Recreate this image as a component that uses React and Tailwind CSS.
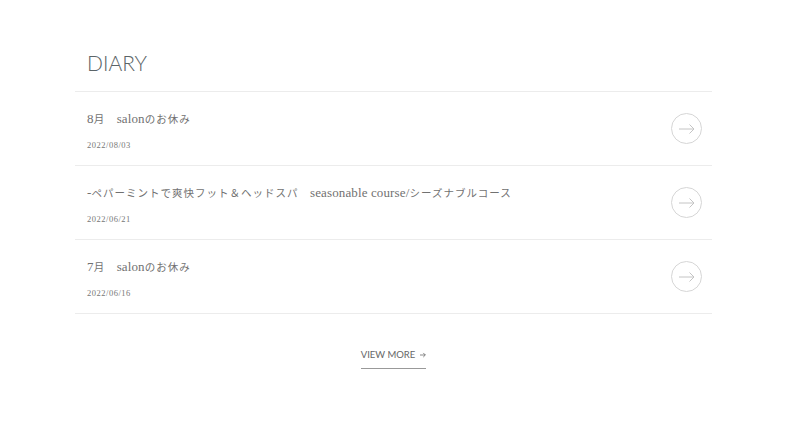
import React from 'react';

const posts = [
  { title: '8月\u3000salonのお休み', date: '2022/08/03' },
  { title: '-ペパーミントで爽快フット＆ヘッドスパ\u3000seasonable course/シーズナブルコース', date: '2022/06/21' },
  { title: '7月\u3000salonのお休み', date: '2022/06/16' },
];

// latin runs are set a little larger than the kana/kanji runs
function Title({ text }) {
  return text.split(/([\x00-\x7F]+)/).filter(Boolean).map((part, i) =>
    /^[\x00-\x7F]+$/.test(part)
      ? <span key={i} className="text-[13px] tracking-[0.01em]">{part}</span>
      : <span key={i} className="text-[10.5px] tracking-[1px]">{part}</span>
  );
}

function ArrowCircle() {
  return (
    <span className="flex items-center justify-center w-[31px] h-[31px] rounded-full border border-[#d6d6d6]">
      <svg width="16" height="10" viewBox="0 0 16 10" fill="none" stroke="#c4c4c4" strokeWidth="1">
        <path d="M0 5h15M10.5 0.5L15 5l-4.5 4.5" />
      </svg>
    </span>
  );
}

export default function App() {
  return (
    <div className="w-[808px] h-[431px] bg-white" style={{ fontFamily: '"Liberation Serif", "Noto Sans CJK JP", serif' }}>
      <section className="ml-[75px] w-[637px] pt-[49px]">
        <h2 className="px-3 font-['Lato',sans-serif] font-light text-[21px] leading-[28px] text-[#5b6467] mb-[14px]">DIARY</h2>
        <ul className="border-t border-[#ececec]">
          {posts.map(post => (
            <li key={post.date} className="flex items-center justify-between border-b border-[#ececec] pl-3 pr-[10px] h-[74px]">
              <div className="pt-[2px]">
                <p className="leading-[20px] text-[#717171]"><Title text={post.title} /></p>
                <p className="mt-[8px] text-[8.5px] leading-[14px] tracking-[0.06em] text-[#777]">{post.date}</p>
              </div>
              <ArrowCircle />
            </li>
          ))}
        </ul>
        <div className="flex justify-center mt-[34px]">
          <a className="flex items-center gap-[5px] pb-[6px] border-b-[1.5px] border-[#999] font-['Lato',sans-serif] text-[9.5px] leading-[14px] text-[#666]">
            VIEW MORE
            <svg width="6" height="6" viewBox="0 0 7 6" fill="none" stroke="#666" strokeWidth="0.9">
              <path d="M0 3h6.2M3.8 0.6L6.2 3 3.8 5.4" />
            </svg>
          </a>
        </div>
      </section>
    </div>
  );
}
